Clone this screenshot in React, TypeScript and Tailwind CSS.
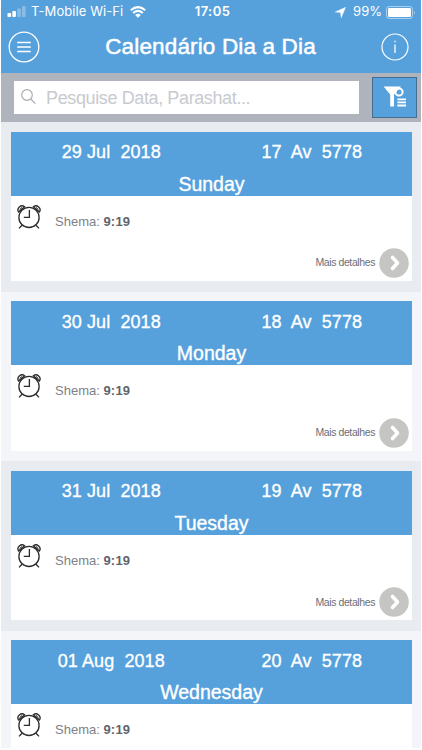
interface Day {
  date: string;
  hebrewDate: string;
  weekday: string;
  shema: string;
}

const days: Day[] = [
  { date: "29 Jul  2018", hebrewDate: "17  Av  5778", weekday: "Sunday", shema: "9:19" },
  { date: "30 Jul  2018", hebrewDate: "18  Av  5778", weekday: "Monday", shema: "9:19" },
  { date: "31 Jul  2018", hebrewDate: "19  Av  5778", weekday: "Tuesday", shema: "9:19" },
  { date: "01 Aug  2018", hebrewDate: "20  Av  5778", weekday: "Wednesday", shema: "9:19" },
];

const SignalIcon = () => (
  <svg width="19" height="12" viewBox="0 0 19 12" fill="#fff">
    <rect x="0.5" y="7" width="3.6" height="4" rx="0.8" />
    <rect x="5.3" y="5" width="3.6" height="6" rx="0.8" />
    <rect x="10.3" y="2.5" width="3.6" height="8.5" rx="0.8" opacity="0.3" />
    <rect x="15" y="0" width="3.6" height="11" rx="0.8" opacity="0.3" />
  </svg>
);

const WifiIcon = () => (
  <svg width="16" height="12" viewBox="0 0 16 12" fill="none" stroke="#fff" strokeWidth="2.1">
    <path d="M0.8 4.2Q8-2 15.2 4.2" />
    <path d="M3.2 7Q8 2.9 12.8 7" />
    <path d="M8 11.7L5.1 8.9Q8 6.5 10.9 8.9Z" fill="#fff" stroke="none" />
  </svg>
);

const LocationIcon = () => (
  <svg width="11" height="11" viewBox="0 0 11 11" fill="#fff">
    <path d="M10.6 0.3L6.2 10.8L5.5 5.6L0.2 5Z" stroke="#fff" strokeWidth="0.4" />
  </svg>
);

const BatteryIcon = () => (
  <svg width="30" height="13" viewBox="0 0 30 13" fill="none">
    <rect x="0.5" y="0.5" width="26" height="12" rx="2.8" stroke="#fff" strokeOpacity="0.5" />
    <rect x="2" y="2" width="23" height="9" rx="1.2" fill="#fff" />
    <path d="M28 4.5Q29.6 6.5 28 8.5Z" fill="#fff" fillOpacity="0.55" />
  </svg>
);

const MenuIcon = () => (
  <svg width="32" height="32" viewBox="0 0 32 32" fill="none" stroke="#fff">
    <circle cx="16" cy="16" r="14.8" strokeWidth="1.3" />
    <path d="M9.2 11.5H22.8M9.2 16H22.8M9.2 20.5H22.8" strokeWidth="1.3" />
  </svg>
);

const InfoIcon = () => (
  <svg width="28" height="28" viewBox="0 0 28 28" fill="none" stroke="#fff">
    <circle cx="14" cy="14" r="13" strokeWidth="1.2" />
    <path d="M14 11.4V20" strokeWidth="1.3" />
    <path d="M14 7.8V9.3" strokeWidth="1.4" />
  </svg>
);

const SearchIcon = () => (
  <svg width="15" height="16" viewBox="0 0 15 16" fill="none" stroke="#aaadb2" strokeWidth="1.2">
    <circle cx="6" cy="6" r="5.3" />
    <path d="M9.8 10L14.3 14.7" />
  </svg>
);

const FilterIcon = () => (
  <svg width="24" height="22" viewBox="0 0 24 22" fill="none">
    <circle cx="16" cy="6" r="3.6" stroke="#fff" strokeWidth="2" />
    <path d="M0.6 0.6H18L11 8.6V20.6H7.2V8.6Z" fill="#fff" />
    <path d="M14.4 13.3H23M14.4 16.4H23M14.4 19.5H23" stroke="#fff" strokeWidth="1.8" />
  </svg>
);

const ClockIcon = () => (
  <svg width="24" height="24" viewBox="0 0 24 24" fill="none" stroke="#2b2b2b" strokeWidth="1.3">
    <circle cx="12" cy="12.4" r="10.1" />
    <path d="M12.4 5V12.4H6.8" />
    <path d="M1.5 6.9C-0.7 3.4 3.9-1 7.6 1.7Z" />
    <path d="M22.5 6.9C24.7 3.4 20.1-1 16.4 1.7Z" />
    <path d="M5 20.2L2 23.4M19 20.2L22 23.4" />
    <path d="M2.6 4.6L5 2.4M21.4 4.6L19 2.4" strokeWidth="1" />
  </svg>
);

const MoreIcon = () => (
  <svg width="30" height="30" viewBox="0 0 30 30" fill="none">
    <circle cx="15" cy="15" r="14.8" fill="#c5c5c3" />
    <path d="M13.5 9.5L18.5 15L13.5 20.5" stroke="#fff" strokeWidth="3.6" strokeLinecap="round" strokeLinejoin="round" />
  </svg>
);

interface DayCardProps {
  day: Day;
  showDetails: boolean;
}

const DayCard = ({ day, showDetails }: DayCardProps) => (
  <li className="h-[169.6px] shrink-0 px-2.5 pt-[9.7px] odd:bg-[#e8ecf0] even:bg-[#f3f5f8]">
    <div className="mr-[-1px] flex h-[149.5px] flex-col bg-white">
      <div className="h-[64px] bg-[#56a1dc] text-white [-webkit-text-stroke:0.35px_white]">
        <div className="grid h-[42px] grid-cols-2 items-center text-center text-[18px] tracking-[0.08px] whitespace-pre">
          <span>{day.date}</span>
          <span>{day.hebrewDate}</span>
        </div>
        <p className="text-center text-[19.5px] leading-[20px]">{day.weekday}</p>
      </div>
      <div className="flex pt-[9px] pl-[6px]">
        <ClockIcon />
        <p className="ml-[14px] pt-[8px] text-[13px] leading-[18px] text-[#7d8187]">
          Shema: <span className="font-bold tracking-[0.2px] text-[#5f646c]">{day.shema}</span>
        </p>
      </div>
      {showDetails && (
        <div className="mt-auto flex items-center justify-end pr-[3px] pb-[3px]">
          <span className="mr-[4px] text-[10.5px] tracking-[-0.4px] text-[#6a6f7a]">Mais detalhes</span>
          <MoreIcon />
        </div>
      )}
    </div>
  </li>
);

export default function App() {
  return (
    <div className="h-[750px] w-[422px] overflow-hidden bg-white px-px pb-[2px] font-['Liberation_Sans',sans-serif]">
      <div className="flex h-full flex-col overflow-hidden">
        <header className="h-[73px] shrink-0 bg-[#56a1dc] text-white">
          <div className="grid h-6 grid-cols-[1fr_auto_1fr] items-center pr-[5px] pl-[6px] font-['Inter',sans-serif] text-[13px]">
            <div className="flex items-center">
              <SignalIcon />
              <span className="mr-[7px] ml-[5px] tracking-[0.08px] whitespace-nowrap">T-Mobile Wi-Fi</span>
              <WifiIcon />
            </div>
            <span className="ml-[2px] font-semibold tracking-[0.4px]">17:05</span>
            <div className="flex items-center justify-end">
              <LocationIcon />
              <span className="mr-[4px] ml-[7px]">99%</span>
              <BatteryIcon />
            </div>
          </div>
          <div className="flex h-[46px] items-center justify-between pr-[12px] pl-[7px]">
            <MenuIcon />
            <h1 className="text-[22.5px] tracking-[0.15px] [-webkit-text-stroke:0.5px_white]">Calendário Dia a Dia</h1>
            <InfoIcon />
          </div>
        </header>

        <div className="flex h-[49px] shrink-0 items-center justify-between bg-[#afb3bb] pr-[4px] pl-[13px]">
          <label className="mb-px flex h-[33px] w-[345px] items-center bg-white pl-[7px]">
            <SearchIcon />
            <input
              className="mt-[2px] ml-[10px] min-w-0 flex-1 text-[18px] tracking-[-0.38px] outline-none placeholder:text-[#c8cacf]"
              placeholder="Pesquise Data, Parashat..."
            />
          </label>
          <button type="button" className="mb-px flex h-[41px] w-[45px] items-center justify-center border border-[#456d92] bg-[#56a1dc]">
            <FilterIcon />
          </button>
        </div>

        <ul className="flex min-h-0 flex-1 flex-col overflow-hidden">
          {days.map((day, index) => (
            <DayCard key={day.date} day={day} showDetails={index < days.length - 1} />
          ))}
        </ul>
      </div>
    </div>
  );
}
